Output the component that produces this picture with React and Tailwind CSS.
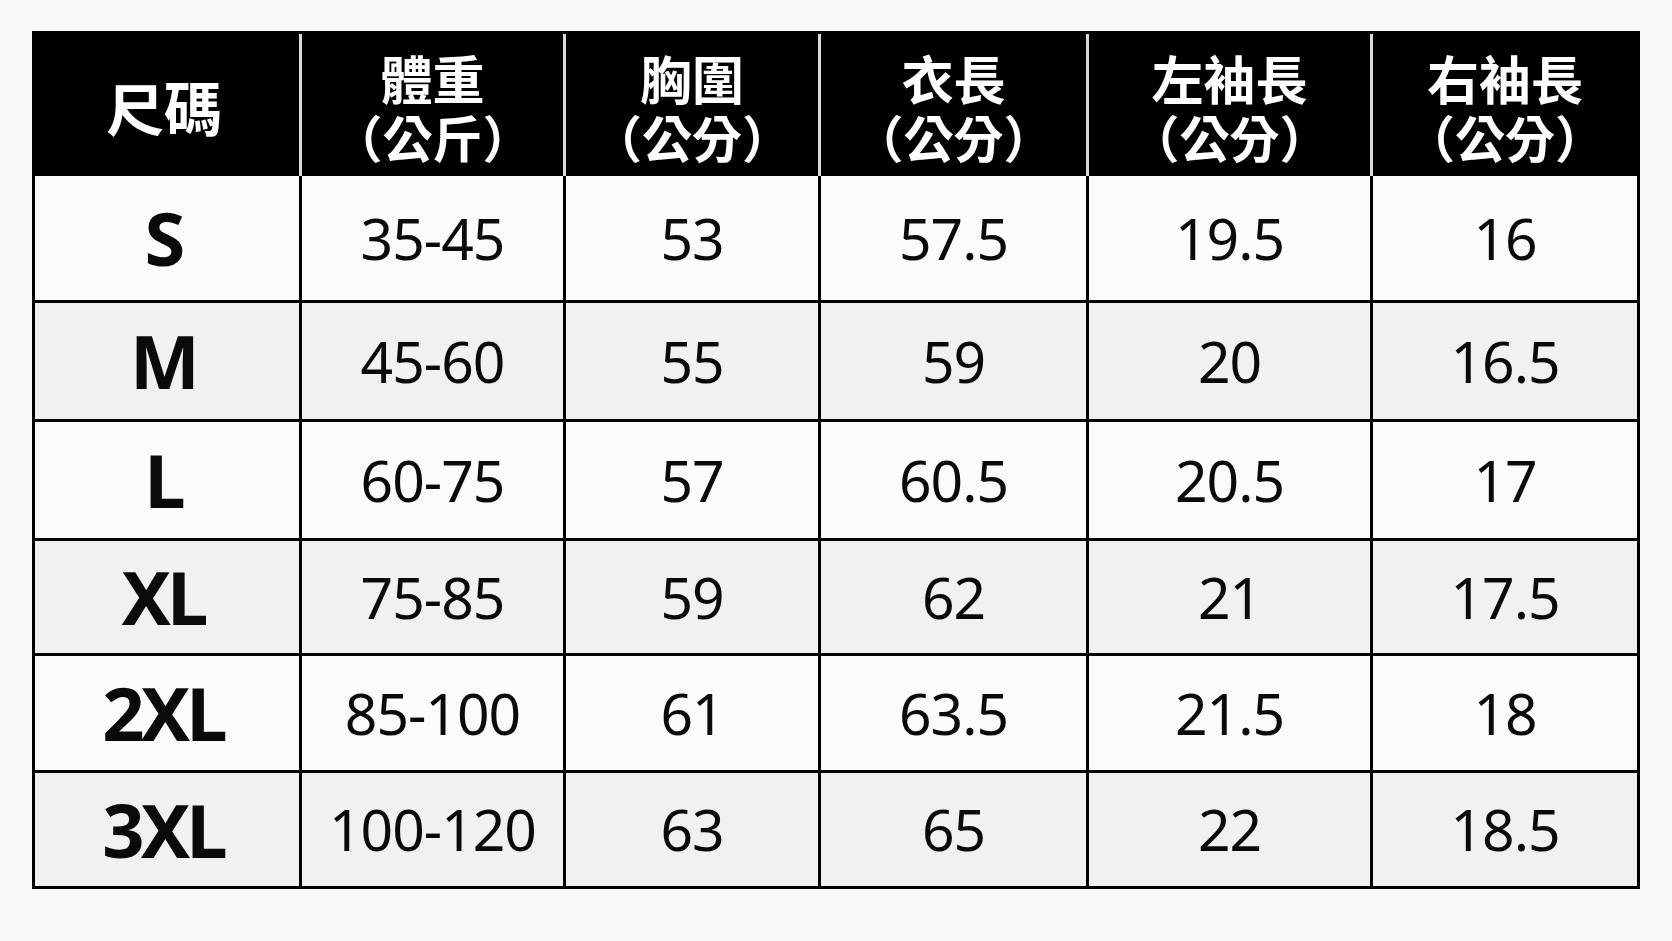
import React from "react";

const cols = "grid grid-cols-[264px_261px_252px_265px_281px_264px] gap-x-[3px]";

const headers = [
  ["尺碼"],
  ["體重", "（公斤）"],
  ["胸圍", "（公分）"],
  ["衣長", "（公分）"],
  ["左袖長", "（公分）"],
  ["右袖長", "（公分）"],
];

const rows = [
  { h: "h-[124px]", bg: "bg-[#fbfbfb]", d: ["S", "35-45", "53", "57.5", "19.5", "16"] },
  { h: "h-[116px]", bg: "bg-[#f1f1f1]", d: ["M", "45-60", "55", "59", "20", "16.5"] },
  { h: "h-[116px]", bg: "bg-[#fbfbfb]", d: ["L", "60-75", "57", "60.5", "20.5", "17"] },
  { h: "h-[112px]", bg: "bg-[#f1f1f1]", d: ["XL", "75-85", "59", "62", "21", "17.5"] },
  { h: "h-[114px]", bg: "bg-[#fbfbfb]", d: ["2XL", "85-100", "61", "63.5", "21.5", "18"] },
  { h: "h-[113px]", bg: "bg-[#f1f1f1]", d: ["3XL", "100-120", "63", "65", "22", "18.5"] },
];

export default function App() {
  return (
    <div className="w-[1672px] h-[941px] bg-[#f9f9f9] pl-[32px] pt-[31px] font-['Noto_Sans','Noto_Sans_CJK_TC',sans-serif]">
      <div className="w-[1608px] border-[3px] border-black bg-black flex flex-col gap-y-[3px]">
        <div className={`${cols} bg-[#d9d9d9]`}>
          {headers.map((h, i) => (
            <div
              key={i}
              className="h-[142px] bg-black text-white flex flex-col items-center justify-center font-bold font-['Noto_Sans_CJK_TC','Noto_Sans',sans-serif]"
            >
              {h.length === 1 ? (
                <span className="text-[58px] leading-none pt-[2px] pr-[6px]">{h[0]}</span>
              ) : (
                <>
                  <span className="text-[52px] leading-[58px] pt-[4px]">{h[0]}</span>
                  <span className="text-[50px] leading-[58px]">{h[1]}</span>
                </>
              )}
            </div>
          ))}
        </div>
        {rows.map((r, ri) => (
          <div key={ri} className={`${cols} bg-black ${ri === 0 ? "-mt-[3px]" : ""}`}>
            {r.d.map((v, ci) => (
              <div
                key={ci}
                className={`${r.h} ${r.bg} flex items-center justify-center text-[#0a0a0a] ${
                  ci === 0 ? "text-[74px] font-bold tracking-[-4px] pr-[8px]" : "text-[57px] font-normal tracking-[-1px]"
                }`}
              >
                <span className="leading-none">{v}</span>
              </div>
            ))}
          </div>
        ))}
      </div>
    </div>
  );
}
